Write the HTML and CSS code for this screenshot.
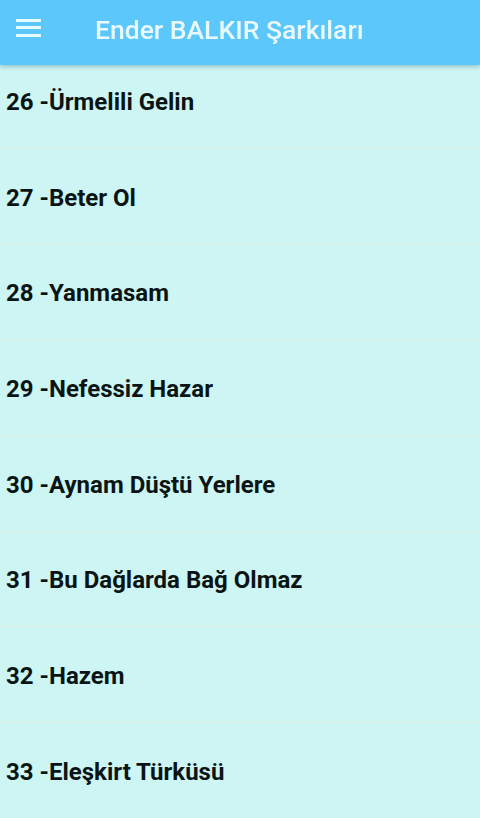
FILE: index.html
```html
<!DOCTYPE html>
<html lang="tr">
<head>
<meta charset="utf-8">
<title>Ender BALKIR Şarkıları</title>
<link rel="stylesheet" href="styles.css">
</head>
<body>
<header class="appbar">
  <span class="menu" aria-label="menu"><i></i><i></i><i></i></span>
  <h1 class="title">Ender BALKIR Şarkıları</h1>
</header>
<ul class="songs">
  <li class="song">26 -Ürmelili Gelin</li>
  <li class="song">27 -Beter Ol</li>
  <li class="song">28 -Yanmasam</li>
  <li class="song">29 -Nefessiz Hazar</li>
  <li class="song">30 -Aynam Düştü Yerlere</li>
  <li class="song">31 -Bu Dağlarda Bağ Olmaz</li>
  <li class="song">32 -Hazem</li>
  <li class="song">33 -Eleşkirt Türküsü</li>
</ul>
</body>
</html>
```
FILE: styles.css
```css
html, body {
  margin: 0;
  padding: 0;
  height: 100%;
  overflow: hidden;
}
body {
  background: #cdf5f3;
  font-family: Roboto, "Noto Sans", sans-serif;
}
.appbar {
  position: fixed;
  top: 0;
  left: 0;
  right: 0;
  height: 65px;
  background: #5bc7fa;
  box-shadow: 0 2px 4px rgba(0, 60, 90, 0.25);
  display: flex;
  align-items: center;
  z-index: 2;
}
.menu {
  display: flex;
  flex-direction: column;
  gap: 4.5px;
  width: 25px;
  margin-left: 16px;
  margin-top: -10px;
}
.menu i {
  display: block;
  height: 3px;
  background: #e6fbff;
}
.title {
  margin: -6px 0 0 54px;
  font-size: 26.5px;
  font-weight: 500;
  color: #e9f9ff;
  letter-spacing: 0;
}
.songs {
  list-style: none;
  margin: 0;
  padding: 53.33px 0 0;
}
.song {
  box-sizing: border-box;
  height: 95.67px;
  border-bottom: 1px solid #e2f0e8;
  display: flex;
  align-items: center;
  padding: 3px 0 0 6px;
  font-size: 24px;
  font-weight: 700;
  color: #0b1414;
}
```
